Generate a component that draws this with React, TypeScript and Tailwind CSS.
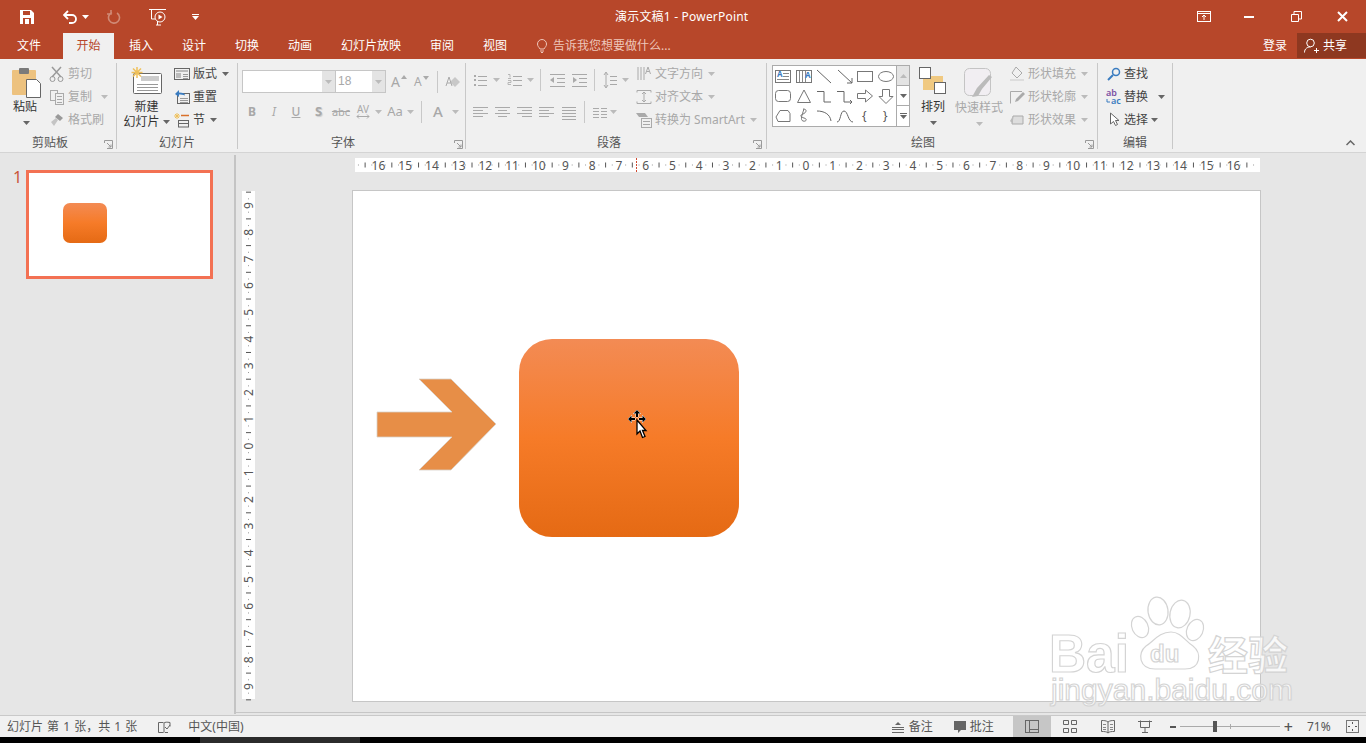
import React from "react";

const cjk = "font-['Noto_Sans','Noto_Sans_CJK_SC',sans-serif]";
const OFF = "#a8a8a8";
const ON = "#444444";

function Caret({ color = "#666", className = "" }: { color?: string; className?: string }) {
  return (
    <svg width="7" height="4" viewBox="0 0 7 4" className={className}>
      <path d="M0 0h7L3.5 4z" fill={color} />
    </svg>
  );
}

function Ic({ w = 16, h = 16, children, className = "" }: { w?: number; h?: number; children: React.ReactNode; className?: string }) {
  return (
    <svg width={w} height={h} viewBox={`0 0 ${w} ${h}`} fill="none" className={`overflow-visible ${className}`}>
      {children}
    </svg>
  );
}

function Launcher({ className }: { className: string }) {
  return (
    <svg width="9" height="9" viewBox="0 0 9 9" fill="none" stroke="#9a9a9a" className={`absolute ${className}`}>
      <path d="M.5 3V.5H8.5V8.5H3" />
      <path d="M3 3l4 4M7 4.5V7H4.5" />
    </svg>
  );
}

function Group({ width, label, labelClass = "justify-center", launcher, children }: { width: string; label: string; labelClass?: string; launcher?: string; children: React.ReactNode }) {
  return (
    <div className={`flex flex-col shrink-0 ${width}`}>
      <div className="h-[76px] flex">{children}</div>
      <div className={`relative h-[15px] flex items-center text-[12px] leading-none text-[#555] ${labelClass}`}>
        {label}
        {launcher && <Launcher className={launcher} />}
      </div>
    </div>
  );
}

function Sep() {
  return <div className="w-px h-[86px] mt-[4px] bg-[#c8c8c8] shrink-0" />;
}

function Row({ icon, label, off, caret, iconW = "w-[18px]", gap = "ml-[2px]", caretGap = "ml-[5px]" }: { icon: React.ReactNode; label: string; off?: boolean; caret?: boolean; iconW?: string; gap?: string; caretGap?: string }) {
  return (
    <div className="h-[23px] flex items-center text-[12px] whitespace-nowrap" style={{ color: off ? OFF : ON }}>
      <span className={`${iconW} flex justify-center shrink-0`}>{icon}</span>
      <span className={gap}>{label}</span>
      {caret && <Caret color={off ? "#bbb" : "#666"} className={caretGap} />}
    </div>
  );
}

function Lines({ rows, x1 = 0, x2 = 14, stroke = "#a8a8a8" }: { rows: number[]; x1?: number; x2?: number; stroke?: string }) {
  return (
    <>
      {rows.map((y) => (
        <path key={y} d={`M${x1} ${y}.5H${x2}`} stroke={stroke} />
      ))}
    </>
  );
}

const shapes: React.ReactNode[] = [
  <>
    <rect x="1.5" y="3.5" width="15" height="12" stroke="#777" />
    <text x="3" y="10" fontSize="8" fontWeight="700" fill="#3a7cc0">A</text>
    <path d="M9 6.5h6M9 9.5h6M3 12.5h12" stroke="#888" />
  </>,
  <>
    <rect x="1.5" y="3.5" width="15" height="12" stroke="#777" />
    <path d="M4.5 4v11M7.5 4v11M10.5 4v11" stroke="#888" />
    <text x="10" y="11" fontSize="8" fontWeight="700" fill="#3a7cc0">A</text>
  </>,
  <path d="M2 3l14 13" stroke="#666" />,
  <path d="M2 3l14 13M16 16v-5M16 16h-5" stroke="#666" />,
  <rect x="1.5" y="4.5" width="15" height="10" stroke="#777" />,
  <ellipse cx="9" cy="9.5" rx="7.5" ry="5" stroke="#777" />,
  <rect x="1.5" y="3.5" width="15" height="11" rx="3" stroke="#777" />,
  <path d="M9 3L15.5 15.5H2.5z" stroke="#777" />,
  <path d="M2 4.5h7v10.500h7" stroke="#666" />,
  <path d="M1 4.500h7v10.500h8M14 13l2 2-2 2" stroke="#666" />,
  <path d="M1.500 6.500h8V3l7 6-7 6v-3.500h-8z" stroke="#777" />,
  <path d="M5.500 2.500h7v7H16l-7 7-7-7h3.500z" stroke="#777" />,
  <path d="M6 3.500h8l2 3v8H4L2 10z" stroke="#777" />,
  <path d="M8 2c5 0 3 4 0 5s-3 3 1 4 2 4-1 3-1-6 1-12" stroke="#777" />,
  <path d="M2 4c7 0 13 3 14 10" stroke="#666" />,
  <path d="M1 15c4 0 3-11 7-11s4 11 9 11" stroke="#666" />,
  <text x="6" y="13" fontSize="12" fill="#555">{"{"}</text>,
  <text x="6" y="13" fontSize="12" fill="#555">{"}"}</text>,
];

function Gallery() {
  return (
    <div className="ml-[5px] mt-[6px] w-[138px] h-[62px] border border-[#ababab] bg-white flex shrink-0">
      <div className="grid grid-cols-6 grid-rows-3 w-[123px]">
        {shapes.map((s, i) => (
          <div key={i} className="w-[20px] h-[20px] flex items-center justify-center">
            <svg width="18" height="18" viewBox="0 0 18 18" fill="none">{s}</svg>
          </div>
        ))}
      </div>
      <div className="flex-1 flex flex-col border-l border-[#ababab]">
        <div className="h-[20px] bg-[#e4e4e4] flex items-center justify-center border-b border-[#ababab]">
          <svg width="7" height="4" viewBox="0 0 7 4"><path d="M0 4h7L3.500 0z" fill="#bbb" /></svg>
        </div>
        <div className="h-[20px] flex items-center justify-center border-b border-[#ababab]"><Caret /></div>
        <div className="flex-1 flex flex-col items-center justify-center gap-[1px]">
          <div className="w-[7px] h-px bg-[#666]" />
          <Caret />
        </div>
      </div>
    </div>
  );
}

function Ribbon() {
  return (
    <div className={`h-[94px] bg-[#f0f0f0] flex border-b border-[#d4d4d4] ${cjk}`}>
      <Group width="w-[116px]" label="剪贴板" labelClass="justify-start pl-[32px]" launcher="left-[104px] top-[5px]">
        <div className="w-[48px] pl-[11px] pt-[8px] flex flex-col items-start">
          <svg width="31" height="31" viewBox="0 0 31 31" fill="none">
            <rect x="1" y="3" width="24" height="25" rx="1" fill="#edc27f" />
            <rect x="8" y="1" width="10" height="6" rx="1" fill="#7a7a7a" />
            <path d="M15.500 12.500h10l4 4v14h-14z" fill="#fff" stroke="#666" />
          </svg>
          <span className="text-[12px] leading-none text-[#333] mt-[3px] ml-[2px]">粘贴</span>
          <Caret className="mt-[8px] ml-[12px]" />
        </div>
        <div className="flex flex-col pt-[3px]">
          <Row off label="剪切" iconW="w-[18px]" icon={<Ic><path d="M3 1l9 10M12 1L3 11" stroke="#999" strokeWidth="1.500" /><circle cx="3.500" cy="13" r="2.500" stroke="#999" /><circle cx="11.500" cy="13" r="2.500" stroke="#999" /></Ic>} />
          <Row off label="复制" caret caretGap="ml-[9px]" icon={<Ic><rect x="1.500" y="1.500" width="7" height="10" stroke="#aaa" /><rect x="6.500" y="4.500" width="8" height="11" fill="#f0f0f0" stroke="#aaa" /><Lines rows={[7, 10, 13]} x1={8} x2={13} /></Ic>} />
          <Row off label="格式刷" icon={<Ic><path d="M9 2l5 4-3 3-5-4z" fill="#999" /><path d="M7 6L2 10l3 4 4-6z" fill="#c4c4c4" /></Ic>} />
        </div>
      </Group>
      <Sep />
      <Group width="w-[120px]" label="幻灯片" labelClass="justify-start pl-[42px]">
        <div className="w-[56px] flex flex-col items-center pt-[8px] pl-[3px]">
          <svg width="32" height="27" viewBox="0 0 32 27" fill="none">
            <rect x="2.500" y="6.500" width="28" height="20" rx="1" fill="#fff" stroke="#666" />
            <rect x="10" y="9" width="18" height="5" fill="#ccc" />
            <Lines rows={[17, 20, 23]} x1={6} x2={27} stroke="#999" />
            <path d="M6 0v11M0.500 5.500h11M2 1.500l8 8M10 1.500l-8 8" stroke="#efc05a" strokeWidth="1.500" />
          </svg>
          <span className="text-[12px] leading-none text-[#333] mt-[7px]">新建</span>
          <div className="flex items-center text-[12px] leading-none text-[#333] mt-[3px] whitespace-nowrap">幻灯片<Caret className="ml-[3px]" /></div>
        </div>
        <div className="flex flex-col pt-[3px]">
          <Row label="版式" caret icon={<Ic><rect x=".5" y="2.500" width="15" height="11" stroke="#666" /><rect x="2" y="4" width="12" height="2" fill="#bbb" /><rect x="2" y="7" width="5" height="5" fill="#bbb" /><Lines rows={[8, 10, 12]} x1={9} x2={14} stroke="#999" /></Ic>} />
          <Row label="重置" icon={<Ic><rect x="3.500" y="4.500" width="12" height="10" stroke="#666" /><path d="M1 5l4-4v2.500c4 0 6 1 6 3-2-1-4-1-6-1V8z" fill="#3a7cc0" /><Lines rows={[9, 11, 13]} x1={6} x2={14} stroke="#999" /></Ic>} />
          <Row label="节" caret icon={<Ic><path d="M3 1v6M0 4h6M1 2l4 4M5 2L1 6" stroke="#efc05a" /><path d="M7 3.500h8" stroke="#d9702a" strokeWidth="1.500" /><rect x="4.500" y="8.500" width="10" height="6.500" stroke="#666" /><path d="M5 11.500h9" stroke="#666" /></Ic>} />
        </div>
      </Group>
      <Sep />
      <Group width="w-[227px]" label="字体" labelClass="justify-start pl-[93px]" launcher="left-[216px] top-[5px]">
        <div className="flex flex-col">
          <div className="h-[41px] flex items-start pl-[4px] pt-[11px]">
            <div className="w-[94px] h-[23px] border border-[#c6c6c6] bg-white flex justify-end">
              <div className="w-[13px] bg-[#e4e4e4] flex items-center justify-center"><Caret color="#bbb" /></div>
            </div>
            <div className="w-[50px] h-[23px] border border-l-0 border-[#c6c6c6] bg-white flex justify-between">
              <span className="text-[12px] leading-[21px] text-[#a8a8a8] pl-[2px] font-['Liberation_Sans',sans-serif]">18</span>
              <div className="w-[13px] bg-[#e4e4e4] flex items-center justify-center"><Caret color="#bbb" /></div>
            </div>
            <div className="flex items-center h-[23px] text-[#a8a8a8] ml-[5px]">
              <span className="w-[21px] text-[14px] leading-none flex items-start">A<svg width="6" height="4" viewBox="0 0 6 4" className="ml-px"><path d="M0 4h6L3 0z" fill="#aaa" /></svg></span>
              <span className="w-[21px] text-[12px] leading-none ml-[2px] flex items-start">A<svg width="6" height="4" viewBox="0 0 6 4" className="ml-px"><path d="M0 0h6L3 4z" fill="#aaa" /></svg></span>
              <div className="w-px h-[22px] bg-[#c8c8c8] ml-[2px]" />
              <Ic w={16} h={14} className="ml-[7px]"><path d="M5 7l5-5 5 5-5 5z" fill="#c8c8c8" /><path d="M1 11L4 2l3 9M2 8h4" stroke="#aaa" /></Ic>
            </div>
          </div>
          <div className="h-[23px] flex items-center text-[#a8a8a8] leading-none pl-[3px]">
            <span className="w-[22px] text-center text-[12px] font-bold">B</span>
            <span className="w-[22px] text-center text-[12px] italic">I</span>
            <span className="w-[22px] text-center text-[12px] underline font-medium">U</span>
            <span className="w-[23px] text-center text-[13px] font-bold [text-shadow:1px_1px_1px_#ccc]">S</span>
            <span className="w-[22px] text-center text-[11px] line-through">abc</span>
            <span className="w-[22px] flex flex-col items-center text-[10px]">AV<svg width="14" height="5" viewBox="0 0 14 5" fill="none"><path d="M1 2.500h12M3 .5L1 2.500l2 2M11 .5l2 2-2 2" stroke="#aaa" /></svg></span>
            <Caret color="#bbb" className="ml-[1px]" />
            <span className="w-[22px] text-center text-[13px] ml-[2px]">Aa</span>
            <Caret color="#bbb" className="ml-[1px]" />
            <div className="w-px h-[22px] bg-[#c8c8c8] ml-[7px]" />
            <span className="w-[28px] text-center text-[15px] font-medium ml-[2px]">A</span>
            <Caret color="#bbb" />
          </div>
        </div>
      </Group>
      <Sep />
      <Group width="w-[300px]" label="段落" labelClass="justify-start pl-[131px]" launcher="left-[287px] top-[5px]">
        <div className="w-[169px] flex flex-col pl-[7px]">
          <div className="h-[41px] flex items-start pt-[9px]">
            <div className="flex items-center h-[24px] w-full">
              <Ic w={14} h={14}><path d="M1 2h2v2H1zM1 6h2v2H1zM1 11h2v2H1z" fill="#aaa" /><Lines rows={[3, 7, 12]} x1={5} /></Ic>
              <Caret color="#bbb" className="ml-[6px]" />
              <Ic w={15} h={14} className="ml-[7px]"><path d="M1 1.500h2v3M1 5.500h3M1 7.500h3v2H1v2h3" stroke="#aaa" strokeWidth="0.800" /><Lines rows={[3, 7, 12]} x1={6} x2={15} /></Ic>
              <Caret color="#bbb" className="ml-[5px]" />
              <div className="w-px h-[22px] bg-[#c8c8c8] ml-[6px]" />
              <Ic w={16} h={14} className="ml-[8px]"><Lines rows={[1, 13]} x1={1} x2={16} /><Lines rows={[5, 9]} x1={8} x2={16} /><path d="M1 7l4-3v6z" fill="#aaa" /></Ic>
              <Ic w={16} h={14} className="ml-[6px]"><Lines rows={[1, 13]} x1={1} x2={16} /><Lines rows={[5, 9]} x1={8} x2={16} /><path d="M6 7L2 4v6z" fill="#aaa" /></Ic>
              <div className="w-px h-[22px] bg-[#c8c8c8] ml-[7px]" />
              <Ic w={14} h={18} className="ml-[8px]"><path d="M3 2v14M1 4l2-3 2 3M1 14l2 3 2-3" stroke="#aaa" /><Lines rows={[5, 9, 13]} x1={7} /></Ic>
              <Caret color="#bbb" className="ml-[5px]" />
            </div>
          </div>
          <div className="h-[23px] flex items-center">
            {[0, 2, 4, 0].map((d, i) => (
              <Ic key={i} w={15} h={14} className="mr-[7px]">
                <path d={d === 0 ? "M0 2.500h15M0 5.500h10M0 8.500h15M0 11.500h10" : d === 2 ? "M0 2.500h15M3 5.500h9M0 8.500h15M3 11.500h9" : "M0 2.500h15M5 5.500h10M0 8.500h15M5 11.500h10"} stroke="#aaa" />
              </Ic>
            ))}
            <Ic w={16} h={16} className="mr-[7px]"><Lines rows={[3, 6, 9, 12, 15]} x1={1} x2={15} /></Ic>
            <div className="w-px h-[22px] bg-[#c8c8c8]" />
            <Ic w={14} h={12} className="ml-[8px]"><path d="M0 2.500h6M8 2.500h6M0 5.500h6M8 5.500h6M0 8.500h6M8 8.500h6M0 11.500h6M8 11.500h6" stroke="#aaa" /></Ic>
            <Caret color="#bbb" className="ml-[3px]" />
          </div>
        </div>
        <div className="flex flex-col pt-[3px]">
          <Row off label="文字方向" caret icon={<Ic><path d="M2 1v13M5 1v13M8 1v13" stroke="#aaa" /><path d="M9.500 8L12 1l2.500 7M10.500 5.500h3" stroke="#aaa" /></Ic>} />
          <Row off label="对齐文本" caret icon={<Ic><path d="M1 3.500V1.500h14v2M1 12.500v2h14v-2" stroke="#aaa" /><path d="M8 3v10M6 5l2-2 2 2M6 11l2 2 2-2" stroke="#aaa" /></Ic>} />
          <Row off label="转换为 SmartArt" caret icon={<Ic><path d="M0 1h9l3 4H3z" fill="#aaa" /><rect x="5.500" y="6.500" width="10" height="9" stroke="#aaa" fill="#f0f0f0" /><Lines rows={[9, 12]} x1={7} /></Ic>} />
        </div>
      </Group>
      <Sep />
      <Group width="w-[330px]" label="绘图" labelClass="justify-start pl-[144px]" launcher="left-[318px] top-[5px]">
        <Gallery />
        <div className="w-[24px] ml-[11px] flex flex-col items-center pt-[8px] shrink-0">
          <svg width="28" height="28" viewBox="0 0 28 28" fill="none" className="shrink-0">
            <rect x="4" y="9" width="20" height="14" fill="#f0c981" />
            <rect x=".5" y=".5" width="11" height="11" fill="#fff" stroke="#666" />
            <rect x="15.500" y="15.500" width="11" height="11" fill="#fff" stroke="#666" />
          </svg>
          <span className="text-[12px] leading-none text-[#333] mt-[6px] whitespace-nowrap">排列</span>
          <Caret className="mt-[8px]" />
        </div>
        <div className="w-[48px] ml-[10px] flex flex-col items-center pt-[9px] shrink-0">
          <svg width="30" height="30" viewBox="0 0 30 30" fill="none">
            <rect x=".5" y=".5" width="26" height="27" rx="5" fill="#f1eef2" stroke="#c4c4c4" />
            <path d="M28 9L18 21l-4 7-6 1 5-9 12-13z" fill="#bbb" />
          </svg>
          <span className="text-[12px] leading-none text-[#a8a8a8] mt-[4px] whitespace-nowrap">快速样式</span>
          <Caret color="#bbb" className="mt-[8px]" />
        </div>
        <div className="flex flex-col pt-[3px] ml-[5px]">
          <Row off label="形状填充" caret icon={<Ic><path d="M7 1l6 6-5 5-5-5z" stroke="#aaa" /><path d="M1 14h14" stroke="#ddd" strokeWidth="2" /></Ic>} />
          <Row off label="形状轮廓" caret icon={<Ic><path d="M13 2.500H1.500v12" stroke="#aaa" /><path d="M14 3l2 2-7 7-3 1 1-3z" fill="#aaa" /></Ic>} />
          <Row off label="形状效果" caret icon={<Ic><path d="M4 4h10v8H3z" fill="#ddd" stroke="#aaa" /><path d="M1 9l3-5v8z" fill="#bbb" /></Ic>} />
        </div>
      </Group>
      <Sep />
      <Group width="w-[74px]" label="编辑" labelClass="justify-start pl-[25px]">
        <div className="flex flex-col pt-[3px] pl-[8px]">
          <Row label="查找" gap="ml-[3px]" iconW="w-[15px]" icon={<Ic w={14} h={14}><circle cx="9" cy="5" r="3.500" stroke="#3a7cc0" strokeWidth="1.500" /><path d="M6 8l-5 5" stroke="#3a7cc0" strokeWidth="2" /></Ic>} />
          <Row label="替换" caret gap="ml-[3px]" iconW="w-[15px]" caretGap="ml-[10px]" icon={<Ic><text x="0" y="7" fontSize="9" fill="#7a4fa3" fontWeight="600">ab</text><text x="5" y="15" fontSize="9" fill="#3a7cc0" fontWeight="600">ac</text><path d="M1 10v3h3" stroke="#3a7cc0" /></Ic>} />
          <Row label="选择" caret gap="ml-[3px]" iconW="w-[15px]" caretGap="ml-[3px]" icon={<Ic w={12} h={15}><path d="M2.500 1v11l3-2.500 2 4 2-1-2-4h3.500z" stroke="#666" fill="#fff" /></Ic>} />
        </div>
      </Group>
      <Sep />
      <div className="flex-1 flex items-end justify-end pr-[11px] pb-[6px]">
        <svg width="9" height="6" viewBox="0 0 9 6" fill="none"><path d="M.5 5l4-4 4 4" stroke="#666" strokeWidth="1.500" /></svg>
      </div>
    </div>
  );
}

function HRuler() {
  const unit = 26.72;
  const zero = 451;
  const nums = Array.from({ length: 33 }, (_, i) => i - 16);
  const ticks = Array.from({ length: 137 }, (_, i) => (i - 68) / 4);
  return (
    <svg width="905" height="14" viewBox="0 0 905 14" className="block bg-white overflow-visible">
      {ticks.map((t) => {
        const x = zero + t * unit;
        if (Number.isInteger(t)) return null;
        const half = Number.isInteger(t * 2);
        return <path key={t} d={half ? `M${x} 4.500v5` : `M${x} 6.500v1`} stroke={half ? "#555" : "#999"} />;
      })}
      {nums.map((n) => (
        <text key={n} x={zero + n * unit} y="11.500" textAnchor="middle" fontSize="12" fill="#555">{Math.abs(n)}</text>
      ))}
      <path d="M281.500 0v14" stroke="#d04a30" strokeDasharray="2 1" />
    </svg>
  );
}

function VRuler() {
  const unit = 26.72;
  const zero = 255;
  const nums = Array.from({ length: 19 }, (_, i) => i - 9);
  const ticks = Array.from({ length: 77 }, (_, i) => (i - 38) / 4);
  return (
    <svg width="13" height="508" viewBox="0 0 13 508" className="block bg-white overflow-visible">
      {ticks.map((t) => {
        const y = zero + t * unit;
        if (Number.isInteger(t)) return null;
        const half = Number.isInteger(t * 2);
        return <path key={t} d={half ? `M4 ${y}h5` : `M6 ${y}h1`} stroke={half ? "#555" : "#999"} />;
      })}
      {nums.map((n) => (
        <text key={n} x="0" y="0" transform={`translate(11 ${zero + n * unit}) rotate(-90)`} textAnchor="middle" fontSize="12" fill="#555">{Math.abs(n)}</text>
      ))}
    </svg>
  );
}

function Watermark() {
  const stroke = { fill: "#fff", stroke: "#d4d4d4", strokeWidth: 1.2 };
  return (
    <svg width="260" height="125" viewBox="0 0 260 125" className="absolute left-[1043px] top-[590px]" fontFamily="'Liberation Sans', sans-serif">
      <g {...stroke} fillOpacity="0.75">
        <ellipse cx="115" cy="21" rx="10" ry="14" transform="rotate(-8 115 21)" />
        <ellipse cx="137" cy="24" rx="10" ry="14" transform="rotate(12 137 24)" />
        <ellipse cx="97" cy="37" rx="8" ry="11" transform="rotate(-25 97 37)" />
        <ellipse cx="152" cy="40" rx="8" ry="11" transform="rotate(25 152 40)" />
        <path d="M128 42c10 0 14 9 22 14 9 7 8 23-8 23h-30c-16 0-18-16-9-23 8-5 13-14 25-14z" />
        <text x="6" y="82" fontSize="54" fontWeight="700" textLength="80" lengthAdjust="spacingAndGlyphs">Bai</text>
        <text x="107" y="72" fontSize="24" fontWeight="700">du</text>
        <text x="165" y="80" fontSize="40" fontWeight="700" fontFamily="'Noto Sans CJK SC', sans-serif">经验</text>
        <text x="8" y="110" fontSize="30" textLength="242" lengthAdjust="spacingAndGlyphs">jingyan.baidu.com</text>
      </g>
    </svg>
  );
}

function Cursor() {
  return (
    <svg width="20" height="30" viewBox="0 0 20 30" className="absolute left-[275px] top-[219px]">
      <g stroke="#fff" strokeWidth="1" fill="#000" paintOrder="stroke">
        <path d="M9 0l3.500 3.500H10V7H8V3.500H5.500z" />
        <path d="M0 9l3.500-3.500V8H7v2H3.500v2.500z" />
        <path d="M18 9l-3.500-3.500V8H11v2h3.500v2.500z" />
      </g>
      <path d="M9 10v14l3-3 2.500 6.500 2.500-1-2.500-6H18z" fill="#fff" stroke="#000" strokeWidth="1.300" />
    </svg>
  );
}

function Slide() {
  return (
    <div className="relative ml-[97px] w-[909px] h-[512px] bg-white border border-[#c6c6c6] shrink-0">
      <svg width="125" height="95" viewBox="0 0 125 95" className="absolute left-[23px] top-[187px]">
        <path d="M1 34H76L43 1H75L120 46 75 92H43L76 59H1z" fill="#e78e47" stroke="#d8d0c8" strokeWidth="0.800" />
      </svg>
      <div className="absolute left-[166px] top-[148px] w-[220px] h-[198px] rounded-[33px] bg-[linear-gradient(180deg,#f38b54_0%,#f67b28_50%,#e56a14_100%)]" />
      <Cursor />
    </div>
  );
}

function StatusBar() {
  return (
    <div className={`h-[22px] bg-[#f1f1f1] border-t border-[#c9c9c9] flex items-center text-[12px] text-[#555] ${cjk}`}>
      <span className="ml-[7px] whitespace-nowrap [word-spacing:1px]">幻灯片 第 1 张，共 1 张</span>
      <Ic w={14} h={14} className="ml-[20px]"><path d="M6.500 2.500H1.500v10h5M7 12.500V3c1-1 3-1 6-.500v4M8 12.500h3" stroke="#666" /><path d="M8 7l2 2 3-4" stroke="#666" /></Ic>
      <span className="ml-[17px]">中文(中国)</span>
      <div className="ml-auto flex items-center h-full">
        <Ic w={12} h={12}><path d="M3 4l3-3 3 3z" fill="#666" /><Lines rows={[6, 8, 11]} x1={0} x2={12} stroke="#666" /></Ic>
        <span className="ml-[5px]">备注</span>
        <Ic w={12} h={12} className="ml-[21px]"><path d="M0 0h12v9H7l-3 3V9H0z" fill="#666" /></Ic>
        <span className="ml-[4px]">批注</span>
        <div className="ml-[19px] w-[38px] h-full bg-[#c6c6c6] flex items-center justify-center">
          <Ic w={14} h={13}><rect x=".5" y=".5" width="13" height="12" stroke="#666" /><path d="M4.500 1v11M5 9.500h8" stroke="#666" /></Ic>
        </div>
        <div className="w-[38px] flex justify-center"><Ic w={14} h={13}><path d="M.5.5h5v4h-5zM8.500.5h5v4h-5zM.5 8.500h5v4h-5zM8.500 8.500h5v4h-5z" stroke="#666" /></Ic></div>
        <div className="w-[38px] flex justify-center"><Ic w={14} h={13}><path d="M7 2C5 .5 3 .5.500.5v11c3 0 5 0 6.500 1.500 1.500-1.500 3.500-1.500 6.500-1.500V.5C11 .5 9 .5 7 2zM7 2v11" stroke="#666" /><Lines rows={[4, 7, 9]} x1={2} x2={5} stroke="#888" /><Lines rows={[4, 7, 9]} x1={9} x2={12} stroke="#888" /></Ic></div>
        <div className="w-[37px] flex justify-center"><Ic w={14} h={13}><path d="M2.500.5v7h9v-7M7 8v4M4 12.500h6" stroke="#666" /><path d="M0 1.500h14" stroke="#666" /></Ic></div>
        <div className="ml-[6px] w-[6px] h-[2px] bg-[#555]" />
        <div className="relative ml-[4px] w-[100px] h-px bg-[#aaa]">
          <div className="absolute left-[33px] -top-[5px] w-[4px] h-[11px] bg-[#555]" />
          <div className="absolute left-[50px] -top-[2px] w-px h-[5px] bg-[#aaa]" />
        </div>
        <span className="ml-[4px] text-[16px] leading-none text-[#555] font-medium">+</span>
        <span className="ml-[14px] text-[12px] w-[26px]">71%</span>
        <Ic w={13} h={13} className="ml-[13px] mr-[7px]"><rect x=".5" y=".5" width="12" height="12" stroke="#777" /><path d="M6.500 2v2M6.500 9v2M2 6.500h2M9 6.500h2" stroke="#555" /></Ic>
      </div>
    </div>
  );
}

const tabs = [
  { t: "插入", w: "w-[53px]" },
  { t: "设计", w: "w-[53px]" },
  { t: "切换", w: "w-[53px]" },
  { t: "动画", w: "w-[53px]" },
  { t: "幻灯片放映", w: "w-[89px]" },
  { t: "审阅", w: "w-[53px]" },
  { t: "视图", w: "w-[54px]" },
];

export default function App() {
  return (
    <div className={`relative w-[1366px] h-[743px] overflow-hidden bg-[#e6e6e6] ${cjk}`}>
      {/* title bar */}
      <div className="h-[33px] bg-[#b7472a] flex items-center text-white text-[12px]">
        <div className="w-[615px] flex items-center pl-[20px] shrink-0">
          <svg width="14" height="14" viewBox="0 0 14 14"><path d="M0 0h11l3 3v11H0z" fill="#fff" /><path d="M3 1h7v4H3z" fill="#b7472a" /><path d="M3 8h8v6H3z" fill="#b7472a" /><path d="M5 9h4v5H5z" fill="#fff" /></svg>
          <svg width="16" height="14" viewBox="0 0 16 14" fill="none" className="ml-[29px]"><path d="M5 1L1 5l4 4" stroke="#fff" strokeWidth="1.800" /><path d="M2 5h7a4 4 0 0 1 0 8H6" stroke="#fff" strokeWidth="1.800" /></svg>
          <Caret color="#fff" className="ml-[3px]" />
          <svg width="14" height="14" viewBox="0 0 14 14" fill="none" className="ml-[18px]"><path d="M10 3a5.500 5.500 0 1 1-5-.5M4 0v4H0" stroke="#d08a76" strokeWidth="1.600" /></svg>
          <svg width="17" height="18" viewBox="0 0 17 18" fill="none" className="ml-[28px]"><path d="M0 1.500h17M2.500 2v9H6M7 17h5M8.500 13v4" stroke="#fff" /><circle cx="11" cy="9" r="5" stroke="#fff" /><path d="M9.500 6.500v5l4-2.500z" fill="#fff" /></svg>
          <div className="ml-[26px] flex flex-col items-center gap-[1px]"><div className="w-[7px] h-px bg-white" /><Caret color="#fff" /></div>
        </div>
        <span className="whitespace-nowrap tracking-[0.2px]">演示文稿1 - PowerPoint</span>
        <div className="ml-auto flex items-center">
          <svg width="14" height="11" viewBox="0 0 14 11" fill="none" className="mr-[33px]"><rect x=".5" y=".5" width="13" height="10" stroke="#fff" /><path d="M.5 2.500h13M7 9V4M5 6l2-2 2 2" stroke="#fff" /></svg>
          <div className="w-[10px] h-[2px] bg-white mr-[37px]" />
          <svg width="11" height="11" viewBox="0 0 11 11" fill="none" className="mr-[35px]"><path d="M.5 3.500h7v7h-7zM3 3V.5h7.500V8H8" stroke="#fff" /></svg>
          <svg width="11" height="11" viewBox="0 0 11 11" fill="none" className="mr-[18px]"><path d="M1 1l9 9M10 1l-9 9" stroke="#fff" strokeWidth="2" /></svg>
        </div>
      </div>
      {/* tabs */}
      <div className="h-[26px] bg-[#b7472a] flex items-end text-white text-[12px] leading-none">
        <div className="h-[26px] w-[63px] pl-[17px] flex items-center">文件</div>
        <div className="h-[26px] w-[51px] bg-[#f0f0f0] text-[#b7472a] flex items-center justify-center">开始</div>
        <div className="w-[15px]" />
        {tabs.map((x) => (
          <div key={x.t} className={`h-[26px] flex items-center shrink-0 ${x.w}`}>{x.t}</div>
        ))}
        <div className="h-[26px] flex items-center text-[#eec6ba]">
          <svg width="10" height="14" viewBox="0 0 10 14" fill="none"><path d="M3 10C2 8 .5 7.500.5 5a4.500 4.500 0 0 1 9 0c0 2.500-1.500 3-2.500 5zM3 12h4M4 13.500h2" stroke="#eec6ba" /></svg>
          <span className="ml-[6px]">告诉我您想要做什么...</span>
        </div>
        <div className="ml-auto h-[26px] flex items-center">
          <span>登录</span>
          <div className="ml-[10px] w-[69px] h-[25px] mb-px bg-[#8e3820] flex items-center pl-[7px]">
            <svg width="15" height="15" viewBox="0 0 15 15" fill="none"><circle cx="6.500" cy="5" r="3.800" stroke="#fff" /><path d="M.5 14.500c0-4 3-5.500 6-5.500M10 12.500h5M12.500 10v5" stroke="#fff" /></svg>
            <span className="ml-[4px]">共享</span>
          </div>
        </div>
      </div>
      <Ribbon />
      {/* main */}
      <div className="h-[562px] flex">
        <div className="w-[234px] shrink-0 flex items-start pl-[13px] pt-[17px]">
          <span className="text-[16px] leading-none text-[#c9553a] w-[13px] -mt-[1px]">1</span>
          <div className="relative w-[187px] h-[109px] border-[3px] border-[#f37153] bg-white">
            <div className="absolute left-[34px] top-[30px] w-[44px] h-[40px] rounded-[7px] bg-[linear-gradient(180deg,#f38b54_0%,#f67b28_50%,#e56a14_100%)]" />
          </div>
        </div>
        <div className="w-[2px] mt-[2px] mb-[1px] bg-[#c4c4c4] shrink-0" />
        <div className="flex-1 flex flex-col border-b border-[#c6c6c6] mb-[2px]">
          <div className="ml-[119px] mt-[5px] w-[905px]"><HRuler /></div>
          <div className="flex mt-[18px] ml-[6px]">
            <div className="w-[13px] mt-[1px] shrink-0"><VRuler /></div>
            <Slide />
          </div>
        </div>
      </div>
      <StatusBar />
      <div className="h-[6px] bg-black flex">
        <div className="ml-[200px] w-[160px] bg-[#2b2b2b]" />
      </div>
      <Watermark />
    </div>
  );
}
